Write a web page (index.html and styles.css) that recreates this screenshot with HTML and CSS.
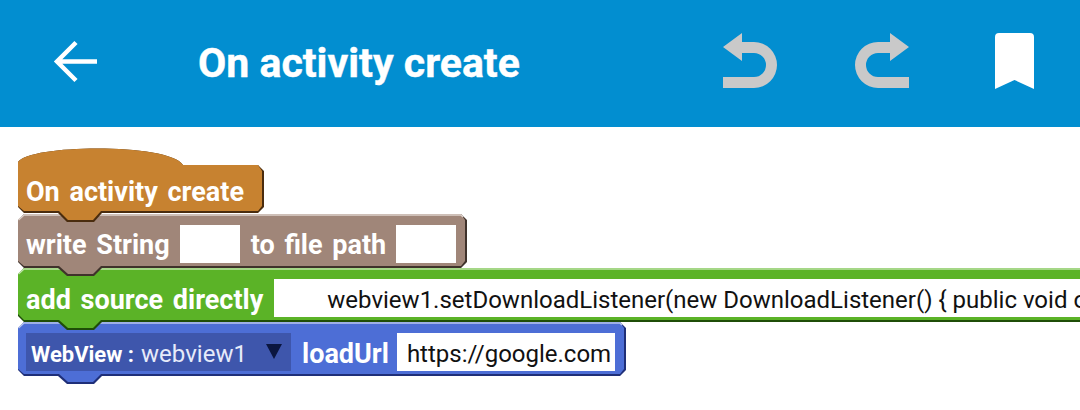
FILE: index.html
```html
<!DOCTYPE html>
<html lang="en">
<head>
    <meta charset="UTF-8">
    <meta name="viewport" content="width=device-width, initial-scale=1.0">
    <title>On activity create</title>
    <link rel="stylesheet" href="styles.css">
</head>
<body>
    <header class="toolbar">
        <svg class="back-icon" width="44" height="44" viewBox="0 0 44 44">
            <path d="M44 21.5H4M23 2.5L4 21.5L23 40.5" fill="none" stroke="#fff" stroke-width="4.5"/>
        </svg>
        <h1 class="title">On activity create</h1>
        <div class="actions">
            <svg class="action-icon" width="56" height="56" viewBox="0 0 56 56">
                <path d="M1 14L20 0V9H32A23 23 0 0 1 32 55H1V44H32A12 12 0 0 0 32 20H20V28Z" fill="#c9c9c9"/>
            </svg>
            <svg class="action-icon flip" width="56" height="56" viewBox="0 0 56 56">
                <path d="M1 14L20 0V9H32A23 23 0 0 1 32 55H1V44H32A12 12 0 0 0 32 20H20V28Z" fill="#c9c9c9"/>
            </svg>
            <svg class="bookmark-icon" width="39" height="56" viewBox="0 0 39 56">
                <path d="M0 4Q0 0 4 0H35Q39 0 39 4V56L19.5 47L0 56Z" fill="#fff"/>
            </svg>
        </div>
    </header>

    <main class="canvas">
        <div class="block hat-block">
            <svg class="block-shape" width="246" height="58" viewBox="0 0 246 58">
                <path d="M0 -3C12 -21 152 -22 165 0H240L246 6V42L240 48H84L76 57H49L40 48H6L0 42Z" fill="#4a2c0e"/>
                <path d="M0 -3C12 -21 152 -22 165 0H240L244 6V41L240 46H83L75 55H50L41 46H6L0 41Z" fill="#c78230"/>
            </svg>
            <span class="label">On activity create</span>
        </div>

        <div class="block string-block">
            <svg class="block-shape" width="449" height="62" viewBox="0 0 449 62">
                <path d="M6 0H443L449 6V48L443 54H84L76 62H49L40 54H6L0 48V6Z" fill="#3f322b"/>
                <path d="M6 0H443L447 6V47L443 52H83L75 60H50L41 52H6L0 47V6Z" fill="#a08679"/>
                <path d="M0.5 6L6 1H443L445 3" fill="none" stroke="#ddd2cc" stroke-width="1.5"/>
            </svg>
            <span class="label">write String</span>
            <span class="empty-input"></span>
            <span class="label spaced">to file path</span>
            <span class="empty-input"></span>
        </div>

        <div class="block source-block">
            <svg class="block-shape" width="1100" height="62" viewBox="0 0 1100 62">
                <path d="M6 0H1100V54H84L76 62H49L40 54H6L0 48V6Z" fill="#1f4d08"/>
                <path d="M6 0H1100V52H83L75 60H50L41 52H6L0 46V6Z" fill="#5bb327"/>
                <path d="M0.5 6L6 1H1100" fill="none" stroke="#bfe3a8" stroke-width="1.5"/>
            </svg>
            <span class="label">add source directly</span>
            <span class="code-input">webview1.setDownloadListener(new DownloadListener() { public void onDownloadStart(String url) {</span>
        </div>

        <div class="block view-block">
            <svg class="block-shape" width="608" height="62" viewBox="0 0 608 62">
                <path d="M6 0H602L608 6V48L602 54H84L76 62H49L40 54H6L0 48V6Z" fill="#1f2f78"/>
                <path d="M6 0H602L606 6V47L602 52H83L75 60H50L41 52H6L0 47V6Z" fill="#4d6ed6"/>
                <path d="M0.5 6L6 1H602L604 3" fill="none" stroke="#b8c5ee" stroke-width="1.5"/>
            </svg>
            <span class="view-select">
                <b class="view-type">WebView :</b>
                <span class="view-name">webview1</span>
                <i class="view-arrow"></i>
            </span>
            <span class="label">loadUrl</span>
            <span class="url-input">https://google.com</span>
        </div>
    </main>
</body>
</html>
```

FILE: styles.css
```css
html, body {
    margin: 0;
    height: 100%;
    background-color: #fff;
    overflow: hidden;
}
body {
    font-family: Roboto, "Liberation Sans", sans-serif;
}
.toolbar {
    height: 127px;
    background-color: #028ed0;
    display: flex;
    align-items: center;
    padding-left: 53px;
    box-sizing: border-box;
}
.back-icon {
    margin-top: -4px;
    flex: none;
}
.title {
    margin: -2px 0 0 101px;
    font-size: 41px;
    font-weight: 700;
    color: #fff;
    -webkit-text-stroke: 0.4px #fff;
}
.actions {
    margin-left: auto;
    margin-top: -5px;
    margin-right: 46px;
    display: flex;
    align-items: center;
    gap: 76px;
}
.action-icon {
    display: block;
}
.action-icon.flip {
    transform: scaleX(-1);
}
.bookmark-icon {
    display: block;
    margin-left: 9px;
}
.canvas {
    padding: 38px 0 0 18px;
}
.block {
    position: relative;
    display: flex;
    align-items: center;
    height: 54px;
    gap: 9px;
    padding-left: 8px;
    box-sizing: border-box;
    width: max-content;
}
.block-shape {
    position: absolute;
    top: 0;
    left: 0;
    overflow: visible;
    z-index: -1;
}
.hat-block {
    height: 49px;
    width: 246px;
    z-index: 4;
    padding-top: 4px;
}
.string-block {
    width: 449px;
    z-index: 3;
    padding-top: 5px;
    gap: 10px;
}
.source-block {
    width: 1100px;
    z-index: 2;
    padding-top: 6px;
}
.view-block {
    width: 608px;
    z-index: 1;
    padding-top: 6px;
}
.label {
    padding-top: 3px;
    font-size: 27px;
    font-weight: 700;
    color: #fff;
    word-spacing: 3px;
    white-space: nowrap;
}
.hat-block .label {
    padding-top: 0;
}
.label.spaced {
    margin-left: 1px;
}
.empty-input {
    width: 60px;
    height: 38px;
    background-color: #fff;
}
.code-input {
    flex: 1;
    height: 38px;
    line-height: 42px;
    padding-left: 53px;
    margin-left: 2px;
    background-color: #fff;
    font-size: 24px;
    color: #111;
    white-space: nowrap;
    overflow: hidden;
}
.view-select {
    display: flex;
    align-items: center;
    width: 265px;
    height: 38px;
    margin-right: 2px;
    box-sizing: border-box;
    padding: 4px 0 0 5px;
    background-color: #3e56ac;
    color: #fff;
}
.view-type {
    font-size: 22px;
    white-space: nowrap;
}
.view-name {
    margin-left: 7px;
    font-size: 24px;
    color: #e6ebfa;
}
.view-arrow {
    margin-left: 19px;
    margin-top: -6px;
    border-left: 8px solid transparent;
    border-right: 8px solid transparent;
    border-top: 15px solid #0b1640;
}
.url-input {
    width: 218px;
    height: 38px;
    margin-left: -1px;
    line-height: 42px;
    padding-left: 10px;
    box-sizing: border-box;
    background-color: #fff;
    font-size: 24px;
    color: #111;
    white-space: nowrap;
}
```
